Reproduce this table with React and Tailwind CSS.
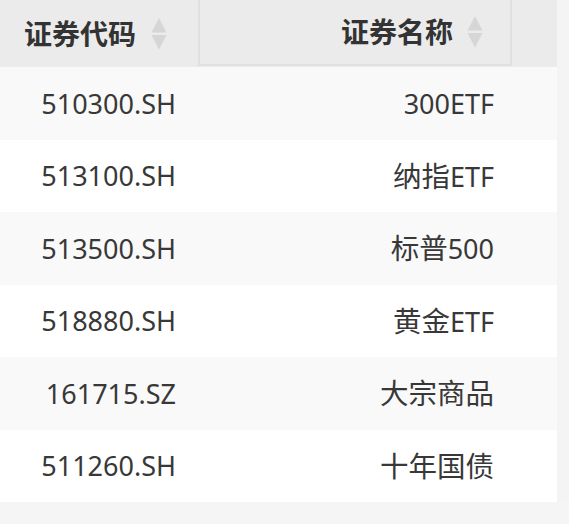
import React from "react";

const rows = [
  ["510300.SH", "300ETF"],
  ["513100.SH", "纳指ETF"],
  ["513500.SH", "标普500"],
  ["518880.SH", "黄金ETF"],
  ["161715.SZ", "大宗商品"],
  ["511260.SH", "十年国债"],
];

function Mixed({ text }) {
  const parts = text.match(/[\u4e00-\u9fff]+|[^\u4e00-\u9fff]+/g) || [];
  return (
    <>
      {parts.map((p, i) =>
        /[\u4e00-\u9fff]/.test(p) ? (
          <span key={i} className="text-[28.5px]">{p}</span>
        ) : (
          <span key={i}>{p}</span>
        )
      )}
    </>
  );
}

function SortIcon() {
  return (
    <svg width="16" height="32" viewBox="0 0 16 32" className="shrink-0">
      <polygon points="8,0 15.5,14.5 0.5,14.5" fill="#d6d6d6" />
      <polygon points="0.5,17 15.5,17 8,31.5" fill="#d6d6d6" />
    </svg>
  );
}

export default function App() {
  return (
    <div
      className="w-[569px] h-[524px] bg-[#f5f5f5] flex flex-col text-[#383838] overflow-hidden"
      style={{ fontFamily: '"Noto Sans", "Noto Sans CJK SC", sans-serif' }}
    >
      <div className="flex">
        <div className="w-[557px] flex flex-col bg-white">
          <div className="flex h-[67px] bg-[#ebebeb] text-[28px] font-bold text-[#333]">
            <div className="w-[198px] flex items-center pl-[24px] gap-[15px]">
              <span>证券代码</span>
              <SortIcon />
            </div>
            <div className="w-[314px] h-[66px] border-x-2 border-b-2 border-[#e0e0e0] flex items-center justify-end pr-[27px] gap-[14px]">
              <span>证券名称</span>
              <SortIcon />
            </div>
          </div>
          {rows.map(([code, name], i) => (
            <div
              key={code}
              className={`flex h-[72.5px] items-center text-[27px] leading-none ${i % 2 === 0 ? "bg-[#f9f9f9]" : "bg-white"}`}
            >
              <div className="w-[198px] text-right pr-[22px]">{code}</div>
              <div className="w-[314px] text-right pr-[18px]">
                <Mixed text={name} />
              </div>
            </div>
          ))}
        </div>
        <div className="flex-1 bg-[#f4f4f4]" />
      </div>
      <div className="flex-1 bg-[#f5f5f5]" />
    </div>
  );
}
